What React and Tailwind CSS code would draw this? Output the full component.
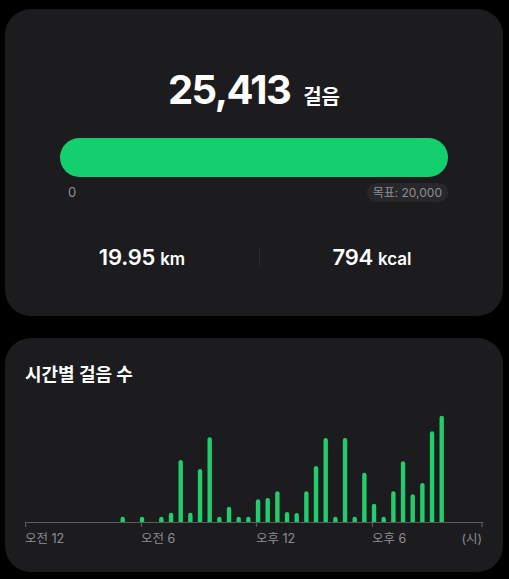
import React from 'react';

// hourly step counts, one bar per half hour (slot 0 = 오전 12:00)
const bars = [
  [10, 5.3], [12, 5.3], [14, 5.3], [15, 9.3], [16, 62], [17, 9.3], [18, 53], [19, 84.7],
  [20, 5.3], [21, 15.3], [22, 5.3], [23, 5.3], [24, 22.7], [25, 24], [26, 30.7], [27, 10],
  [28, 9], [29, 30.7], [30, 56], [31, 84], [32, 5.3], [33, 84], [34, 5.3], [35, 49.3],
  [36, 18.3], [37, 5.3], [38, 30.7], [39, 60.7], [40, 27.7], [41, 39], [42, 90.7], [43, 106.3],
];

const ticks = [
  { x: 0.5, label: '오전 12' },
  { x: 116.5, label: '오전 6' },
  { x: 231.5, label: '오후 12' },
  { x: 347.5, label: '오후 6' },
  { x: 457, label: null },
];

const BASE = 122;

function barPath(slot, h) {
  const w = 4.4;
  const r = w / 2;
  const cx = 97.7 + (slot - 10) * 9.667;
  const x = cx - r;
  const top = BASE - h;
  return `M${x},${BASE} V${top + r} A${r},${r} 0 0 1 ${x + w},${top + r} V${BASE} Z`;
}

function StatItem({ value, unit }) {
  return (
    <div className="flex items-baseline justify-center text-white">
      <span className="text-[22px] font-semibold tracking-[-0.01em]">{value}</span>
      <span className="ml-[5px] text-[17px] font-semibold">{unit}</span>
    </div>
  );
}

function StepChart() {
  return (
    <svg width="458" height="150" viewBox="0 0 458 150" className="block">
      {bars.map(([slot, h]) => (
        <path key={slot} d={barPath(slot, h)} fill="#22cd6c" />
      ))}
      <line x1="0" y1={BASE + 0.5} x2="458" y2={BASE + 0.5} stroke="#5c5c60" strokeWidth="1.2" />
      {ticks.map((t) => (
        <line key={t.x} x1={t.x} y1={BASE} x2={t.x} y2={BASE + 5} stroke="#5c5c60" strokeWidth="1.2" />
      ))}
      {ticks.filter((t) => t.label).map((t) => (
        <text
          key={t.label}
          x={t.x - 0.5}
          y="143"
          fill="#8e8e93"
          fontSize="12.5"
          fontFamily="Inter, 'Noto Sans CJK KR', sans-serif"
        >
          {t.label}
        </text>
      ))}
      <text
        x="457"
        y="143"
        textAnchor="end"
        fill="#8e8e93"
        fontSize="12.5"
        fontFamily="Inter, 'Noto Sans CJK KR', sans-serif"
      >
        (시)
      </text>
    </svg>
  );
}

export default function App() {
  return (
    <div className="min-h-[579px] w-[509px] bg-black px-[5px] pt-[9px] font-['Inter','Noto_Sans_CJK_KR',sans-serif]">
      {/* Today summary */}
      <div className="h-[307px] w-[498px] rounded-[26px] bg-[#1c1c1e] pt-[61px]">
        <div className="flex h-[40px] items-baseline justify-center leading-none text-white">
          <span className="text-[40px] font-bold tracking-[-0.04em]">25,413</span>
          <span className="ml-[13px] text-[20px] font-bold">걸음</span>
        </div>

        <div className="mx-[55px] mt-[28px]">
          <div className="h-[39px] w-full rounded-full bg-[#13cf6d]" />
          <div className="mt-[6px] flex h-[19px] items-center justify-between">
            <span className="pl-[8px] text-[13px] text-[#8e8e93]">0</span>
            <span className="flex h-[19px] items-center rounded-full bg-[#28282b] px-[6px] text-[12px] text-[#8e8e93]">
              목표: 20,000
            </span>
          </div>
        </div>

        <div className="mt-[35px] flex h-[40px] items-center pl-[20px]">
          <div className="w-[234px]">
            <StatItem value="19.95" unit="km" />
          </div>
          <div className="h-[20px] w-px bg-[#2c2c2e]" />
          <div className="w-[224px]">
            <StatItem value="794" unit="kcal" />
          </div>
        </div>
      </div>

      {/* Hourly chart */}
      <div className="mt-[22px] h-[234px] w-[498px] rounded-[26px] bg-[#1c1c1e] px-[20px] pt-[25px]">
        <h2 className="text-[18px] font-bold leading-[24px] text-white">시간별 걸음 수</h2>
        <div className="mt-[13px]">
          <StepChart />
        </div>
      </div>
    </div>
  );
}
